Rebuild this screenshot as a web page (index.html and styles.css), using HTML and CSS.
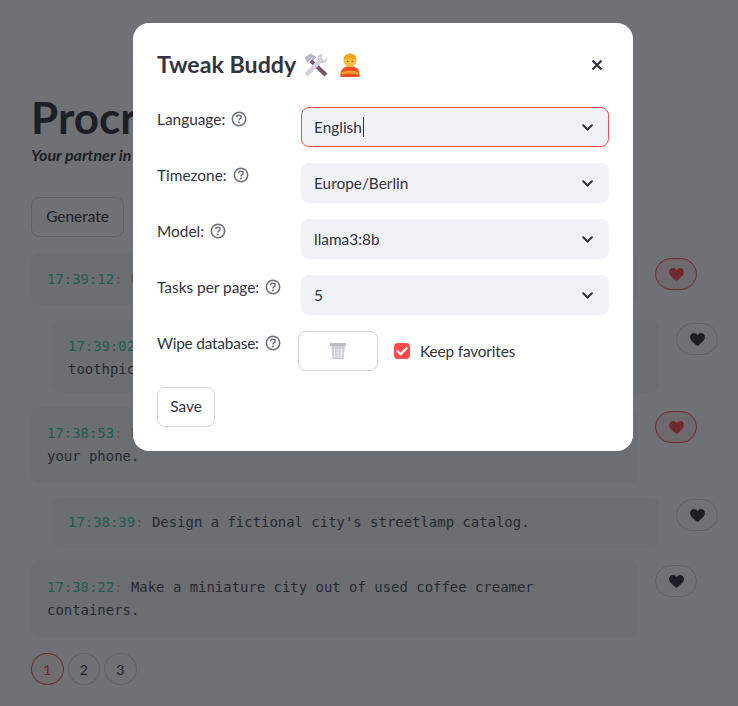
FILE: index.html
```html
<!DOCTYPE html>
<html lang="en">
<head>
    <meta charset="UTF-8">
    <meta name="viewport" content="width=device-width, initial-scale=1.0">
    <title>Procrastination Buddy</title>
    <link rel="stylesheet" href="styles.css">
</head>
<body>
    <svg class="icon-defs" width="0" height="0">
        <symbol id="heart" viewBox="0 0 16 14">
            <path d="M8 14C3 10 0 7.600 0 4.300 0 1.800 1.900 0 4.200 0 5.800 0 7.200.8 8 2.200 8.800.8 10.200 0 11.800 0 14.100 0 16 1.800 16 4.300 16 7.600 13 10 8 14Z"/>
        </symbol>
        <symbol id="help" viewBox="0 0 16 16">
            <circle cx="8" cy="8" r="6.700" fill="none" stroke="currentColor" stroke-width="1.500"/>
            <path d="M5.800 6.300C5.800 5 6.900 4.200 8 4.200S10.200 5 10.200 6.200C10.200 7.700 8 7.700 8 9.400" fill="none" stroke="currentColor" stroke-width="1.500"/>
            <circle cx="8" cy="11.500" r="1" fill="currentColor"/>
        </symbol>
        <symbol id="chevron" viewBox="0 0 11 7">
            <path d="M1.200 1.200 5.500 5.500 9.800 1.200" fill="none" stroke="currentColor" stroke-width="2" stroke-linecap="round" stroke-linejoin="round"/>
        </symbol>
    </svg>

    <main class="page">
        <h1 class="title">Procrastination Buddy</h1>
        <p class="tagline">Your partner in procrastination</p>
        <div class="actions">
            <button class="btn generate" type="button">Generate</button>
        </div>

        <ul class="tasks">
            <li class="task">
                <div class="task-text"><span class="time">17:39:12</span><span class="colon">:</span> <span class="colon">U</span>se old magazines to build a tiny paper fort.</div>
                <button class="heart liked" type="button"><svg><use href="#heart"/></svg></button>
            </li>
            <li class="task nested">
                <div class="task-text"><span class="time">17:39:02</span><span class="colon">:</span> Sculpt a model of your street using only<br>toothpicks and leftover packing foam.</div>
                <button class="heart" type="button"><svg><use href="#heart"/></svg></button>
            </li>
            <li class="task">
                <div class="task-text"><span class="time">17:38:53</span><span class="colon">:</span> <span class="colon">U</span>se voice memos to write an opera about<br>your phone.</div>
                <button class="heart liked" type="button"><svg><use href="#heart"/></svg></button>
            </li>
            <li class="task nested">
                <div class="task-text"><span class="time">17:38:39</span><span class="colon">:</span> Design a fictional city's streetlamp catalog.</div>
                <button class="heart" type="button"><svg><use href="#heart"/></svg></button>
            </li>
            <li class="task">
                <div class="task-text"><span class="time">17:38:22</span><span class="colon">:</span> Make a miniature city out of used coffee creamer<br>containers.</div>
                <button class="heart" type="button"><svg><use href="#heart"/></svg></button>
            </li>
        </ul>

        <nav class="pager">
            <button class="page-num current" type="button">1</button>
            <button class="page-num" type="button">2</button>
            <button class="page-num" type="button">3</button>
        </nav>
    </main>

    <div class="backdrop"></div>

    <section class="dialog">
        <header class="dialog-head">
            <h2 class="dialog-title">Tweak Buddy
                <svg class="emoji" viewBox="0 0 24 24">
                    <path d="M8 6.500 23.500 20.500 20.500 23.500 5.500 9Z" fill="#7a5168"/>
                    <path d="M18.500.5C14.800.5 13 3.500 14 6.500L.8 20 3.800 23.500 17.200 9.800C20.500 11 23.800 8.500 23.500 4.800L20.500 7 17.800 5.800 18.200 3Z" fill="#d6d1e0"/>
                    <path d="M.5 4.500 6.500.5 12.500 4 9.500 7.500 7 6 3.500 10Z" fill="#bdb6ca"/>
                </svg>
                <svg class="emoji person" viewBox="0 0 24 24">
                    <path d="M2.500 24C1.500 16.500 6 13 12 13S22.500 16.500 21.500 24Z" fill="#f0511f"/>
                    <path d="M3 19.500C8 17 16 17 21 19.500L20 21.800C15 20 9 20 4 21.800Z" fill="#fa9f2a"/>
                    <circle cx="12" cy="7.500" r="6.500" fill="#fdbf3f"/>
                    <path d="M5.500 7C5.500 2.500 9 .5 12 .5S18.500 2.500 18.500 7C15 4.500 9 4.500 5.500 7Z" fill="#f7a11f"/>
                    <circle cx="9.500" cy="8.500" r=".8" fill="#8a5a28"/>
                    <circle cx="14.500" cy="8.500" r=".8" fill="#8a5a28"/>
                </svg>
            </h2>
            <button class="close" type="button">
                <svg viewBox="0 0 12 12"><path d="M1.500 1.500l9 9M10.500 1.500l-9 9"/></svg>
            </button>
        </header>

        <div class="field">
            <label class="field-label">Language: <svg class="help"><use href="#help"/></svg></label>
            <div class="select focused"><span class="value">English<i class="caret"></i></span><svg class="chevron"><use href="#chevron"/></svg></div>
        </div>
        <div class="field">
            <label class="field-label">Timezone: <svg class="help"><use href="#help"/></svg></label>
            <div class="select"><span class="value">Europe/Berlin</span><svg class="chevron"><use href="#chevron"/></svg></div>
        </div>
        <div class="field">
            <label class="field-label">Model: <svg class="help"><use href="#help"/></svg></label>
            <div class="select"><span class="value">llama3:8b</span><svg class="chevron"><use href="#chevron"/></svg></div>
        </div>
        <div class="field">
            <label class="field-label">Tasks per page: <svg class="help"><use href="#help"/></svg></label>
            <div class="select"><span class="value">5</span><svg class="chevron"><use href="#chevron"/></svg></div>
        </div>
        <div class="field wipe">
            <label class="field-label">Wipe database: <svg class="help"><use href="#help"/></svg></label>
            <button class="btn trash" type="button">
                <svg viewBox="0 0 16 16">
                    <path d="M0 0h16v3.200H0Z" fill="#bdb8c8"/>
                    <path d="M1.200 3.200h13.600L13.600 16H2.400Z" fill="#cbc7d5"/>
                    <path d="M4.300 4.500l.5 10.500M8 4.500V15M11.700 4.500l-.5 10.500M2 7h12M2.300 10h11.400M2.600 13h10.800" stroke="#eeecf2" stroke-width=".9" fill="none"/>
                </svg>
            </button>
            <label class="check">
                <span class="box"><svg viewBox="0 0 16 16"><path d="M3.500 8.300 6.700 11.300 12.500 5.200" fill="none" stroke="#fff" stroke-width="2.200" stroke-linecap="round" stroke-linejoin="round"/></svg></span>
                <span class="check-text">Keep favorites</span>
            </label>
        </div>

        <button class="btn save" type="button">Save</button>
    </section>
</body>
</html>
```

FILE: styles.css
```css
* {
    box-sizing: border-box;
}
html, body {
    height: 100%;
}
body {
    margin: 0;
    background: white;
    color: #31333f;
    font-family: "Lato", "Noto Sans", sans-serif;
    font-size: 15.4px;
    overflow: hidden;
}
.icon-defs {
    display: none;
}
button {
    font-family: inherit;
    color: inherit;
}

/* page behind the dialog */
.page {
    padding: 88px 20px 0 31px;
}
.title {
    margin: 0;
    font-size: 44px;
    line-height: 58px;
    font-weight: 700;
    white-space: nowrap;
}
.tagline {
    margin: 0;
    height: 22px;
    font-weight: 700;
    font-style: italic;
    font-size: 16px;
    line-height: 18px;
    white-space: nowrap;
}
.actions {
    margin-top: 29px;
}
.btn {
    height: 40px;
    padding: 0 0 2px;
    background: white;
    border: 1px solid #d3d4d8;
    border-radius: 8px;
    font-size: 15.4px;
}
.generate {
    width: 93px;
}
.tasks {
    list-style: none;
    margin: 16px 0 0;
    padding: 0;
}
.task {
    display: flex;
    align-items: flex-start;
    gap: 17px;
    margin-bottom: 14px;
}
.task:nth-child(1) {
    margin-bottom: 15px;
}
.task:nth-child(4) {
    margin-bottom: 12px;
}
.task:nth-child(5) {
    margin-bottom: 16px;
}
.task.nested {
    margin-left: 21px;
}
.task-text {
    width: 607px;
    padding: 15px 16px 14px;
    background: #f6f9f9;
    border-radius: 8px;
    color: #4a4c58;
    font-family: "DejaVu Sans Mono", "Liberation Mono", monospace;
    font-size: 13.95px;
    line-height: 23px;
    white-space: nowrap;
    overflow: hidden;
}
.task:nth-child(2) .task-text {
    padding-bottom: 12px;
}
.task:nth-child(3) .task-text {
    padding-bottom: 15px;
}
.task:nth-child(4) .task-text {
    padding: 14px 16px 14px;
}
.task:nth-child(5) .task-text {
    padding: 16px 16px 15px;
}
.time {
    color: #3cc8ac;
}
.colon {
    color: #ffa066;
}
.heart {
    width: 42px;
    height: 32px;
    margin-top: 5px;
    padding: 0;
    background: white;
    border: 1px solid #d3d4d8;
    border-radius: 16px;
    display: flex;
    align-items: center;
    justify-content: center;
}
.task:nth-child(2) .heart {
    margin-top: 3px;
}
.task:nth-child(3) .heart {
    margin-top: 4px;
}
.task:nth-child(4) .heart {
    margin-top: 2px;
}
.heart svg {
    width: 15px;
    height: 13px;
    fill: #31333f;
}
.heart.liked {
    border-color: #ff4b4b;
    background: #fbeaea;
}
.heart.liked svg {
    fill: #ff4b4b;
}
.pager {
    display: flex;
    gap: 4px;
}
.page-num {
    width: 32.500px;
    height: 32px;
    padding: 0;
    background: white;
    border: 1px solid #d3d4d8;
    border-radius: 50%;
    font-size: 14px;
}
.page-num.current {
    color: #ff4b4b;
    border-color: #ff4b4b;
    background: #fff5f5;
}

/* dialog */
.backdrop {
    position: fixed;
    inset: 0;
    background: rgba(17, 18, 24, 0.6);
}
.dialog {
    position: absolute;
    left: 133px;
    top: 23px;
    width: 500px;
    height: 428px;
    padding: 24px;
    background: white;
    border-radius: 16px;
}
.dialog-head {
    display: flex;
    align-items: center;
    justify-content: space-between;
    height: 36px;
    margin-bottom: 24px;
}
.dialog-title {
    margin: 0;
    display: flex;
    align-items: center;
    gap: 8px;
    font-size: 23.200px;
    font-weight: 700;
    padding-bottom: 2px;
}
.emoji {
    width: 24px;
    height: 24px;
    margin-top: 2px;
}
.person {
    margin-left: 2px;
}
.close {
    width: 24px;
    height: 24px;
    padding: 0;
    background: none;
    border: none;
}
.close svg {
    display: block;
    width: 12px;
    height: 12px;
    margin: auto;
}
.close path {
    fill: none;
    stroke: #31333f;
    stroke-width: 2.200;
}
.field {
    display: flex;
    align-items: flex-start;
    height: 40px;
    margin-bottom: 16px;
}
.field-label {
    width: 144px;
    flex: none;
    display: flex;
    align-items: center;
    gap: 6px;
    height: 24px;
}
.help {
    width: 16px;
    height: 16px;
    color: #6c6e78;
}
.select {
    flex: 1;
    height: 40px;
    padding: 0 15px 0 12px;
    display: flex;
    align-items: center;
    justify-content: space-between;
    background: #f0f2f6;
    border: 1px solid #f0f2f6;
    border-radius: 8px;
}
.select.focused {
    border-color: #ff4b4b;
}
.value {
    margin-bottom: 1px;
}
.chevron {
    width: 11px;
    height: 7px;
    color: #31333f;
}
.caret {
    display: inline-block;
    width: 1px;
    height: 20px;
    margin-left: 1px;
    background: #31333f;
    vertical-align: -4px;
}
.wipe .field-label {
    width: 141px;
    letter-spacing: -0.2px;
}
.trash {
    width: 80px;
    padding: 0;
    display: flex;
    align-items: center;
    justify-content: center;
    flex: none;
}
.trash svg {
    width: 16px;
    height: 16px;
}
.check {
    display: flex;
    align-items: center;
    gap: 10px;
    height: 40px;
    margin-left: 16px;
}
.check-text {
    letter-spacing: -0.15px;
}
.box {
    width: 16px;
    height: 16px;
    background: #ff4b4b;
    border-radius: 4px;
}
.box svg {
    display: block;
}
.save {
    width: 58px;
}
```
